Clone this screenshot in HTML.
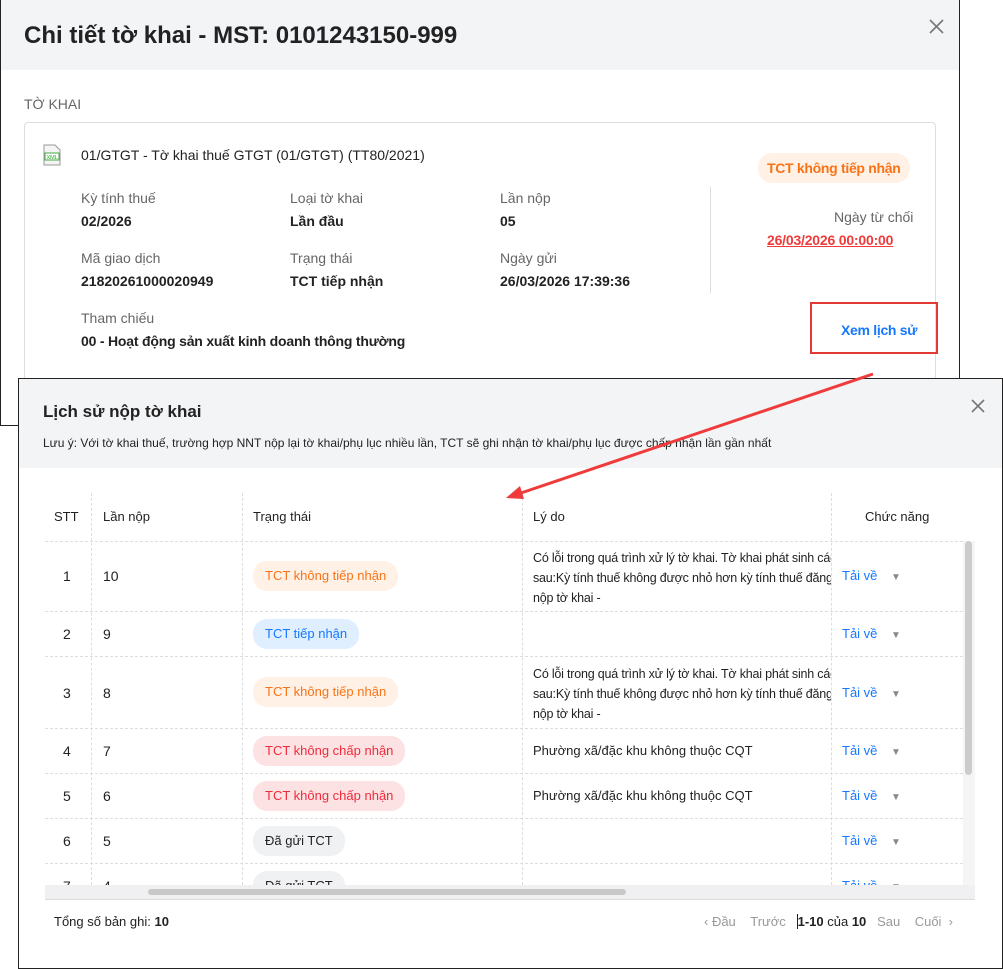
<!DOCTYPE html>
<html><head><meta charset="utf-8"><style>
*{box-sizing:border-box;margin:0;padding:0}
body{width:1003px;height:969px;position:relative;overflow:hidden;background:#fff;font-family:"Liberation Sans",Arial,sans-serif;color:#222;font-size:14px}
.abs{position:absolute}
.m1{left:0;top:0;width:960px;height:426px;border:1px solid #222;border-top:none;background:#fff}
.m1h{left:1px;top:0;width:958px;height:70px;background:#f3f4f6}
.lbl{color:#666;font-size:14px}
.val{color:#222;font-size:14px;font-weight:bold}
.pill{display:inline-block;border-radius:14px;padding:0 12px;height:30px;line-height:30px;font-size:13px}
.or{background:#fff1e6;color:#f97316}
.bl{background:#e0efff;color:#1677ff}
.rd{background:#fde2e4;color:#ef2b3a}
.gr{background:#f0f1f3;color:#222}
.m2{left:18px;top:378px;width:985px;height:591px;border:1px solid #222;background:#fff}
.vl{border-left:1px dashed #ddd}
.hl{border-top:1px dashed #ddd}
.tai{color:#1677ff;font-size:13px}
.car{color:#888;font-size:10px}
</style></head><body>
<div class="abs m1"></div>
<div class="abs m1h"></div>
<div class="abs" style="left:24px;top:22px;font-size:24px;font-weight:bold;color:#222">Chi tiết tờ khai - MST: 0101243150-999</div>
<svg class="abs" style="left:929px;top:19px" width="15" height="15"><path d="M1 1L14 14M14 1L1 14" stroke="#777" stroke-width="1.6"/></svg>
<div class="abs" style="left:24px;top:96px;font-size:14px;color:#666">TỜ KHAI</div>
<div class="abs" style="left:24px;top:122px;width:912px;height:300px;border:1px solid #ddd;border-radius:4px"></div>
<svg class="abs" style="left:42px;top:144px" width="20" height="22" viewBox="0 0 20 22"><path d="M2 1h11l5 5v15H2z" fill="#f4f4f4" stroke="#999"/><rect x="3" y="9" width="14" height="7" fill="#fff" stroke="#4a4"/><text x="4.5" y="15" font-size="5.5" fill="#2a2" font-family="Liberation Sans">XML</text></svg>
<div class="abs val" style="left:81px;top:147px;font-weight:normal">01/GTGT - Tờ khai thuế GTGT (01/GTGT) (TT80/2021)</div>
<div class="abs lbl" style="left:81px;top:190px">Kỳ tính thuế</div><div class="abs val" style="left:81px;top:213px">02/2026</div>
<div class="abs lbl" style="left:290px;top:190px">Loại tờ khai</div><div class="abs val" style="left:290px;top:213px">Lần đầu</div>
<div class="abs lbl" style="left:500px;top:190px">Lần nộp</div><div class="abs val" style="left:500px;top:213px">05</div>
<div class="abs lbl" style="left:81px;top:250px">Mã giao dịch</div><div class="abs val" style="left:81px;top:273px">21820261000020949</div>
<div class="abs lbl" style="left:290px;top:250px">Trạng thái</div><div class="abs val" style="left:290px;top:273px">TCT tiếp nhận</div>
<div class="abs lbl" style="left:500px;top:250px">Ngày gửi</div><div class="abs val" style="left:500px;top:273px">26/03/2026 17:39:36</div>
<div class="abs lbl" style="left:81px;top:310px">Tham chiếu</div><div class="abs val" style="left:81px;top:333px;letter-spacing:-0.2px">00 - Hoạt động sản xuất kinh doanh thông thường</div>
<div class="abs" style="left:710px;top:187px;width:1px;height:106px;background:#ddd"></div>
<div class="abs pill or" style="left:758px;top:153px;font-size:14px;font-weight:bold;padding:0 9px;letter-spacing:-0.3px">TCT không tiếp nhận</div>
<div class="abs lbl" style="left:834px;top:209px">Ngày từ chối</div>
<div class="abs" style="left:767px;top:232px;color:#ef3b3b;text-decoration:underline;font-weight:bold;letter-spacing:-0.2px">26/03/2026 00:00:00</div>
<div class="abs" style="left:810px;top:302px;width:128px;height:52px;border:2px solid #e53935"></div>
<div class="abs" style="left:841px;top:322px;color:#1677ff;font-weight:bold;letter-spacing:-0.3px">Xem lịch sử</div>

<div class="abs m2"></div>
<div class="abs" style="left:19px;top:379px;width:983px;height:89px;background:#f3f4f6"></div>
<div class="abs" style="left:43px;top:402px;font-size:17px;font-weight:bold">Lịch sử nộp tờ khai</div>
<div class="abs" style="left:43px;top:436px;font-size:12px">Lưu ý: Với tờ khai thuế, trường hợp NNT nộp lại tờ khai/phụ lục nhiều lần, TCT sẽ ghi nhận tờ khai/phụ lục được chấp nhận lần gần nhất</div>
<svg class="abs" style="left:971px;top:399px" width="14" height="14"><path d="M1 1L13 13M13 1L1 13" stroke="#777" stroke-width="1.6"/></svg>

<div class="abs vl" style="left:91px;top:493px;height:392px"></div>
<div class="abs vl" style="left:242px;top:493px;height:392px"></div>
<div class="abs vl" style="left:522px;top:493px;height:392px"></div>
<div class="abs vl" style="left:831px;top:493px;height:392px"></div>
<div class="abs" style="left:54px;top:509px;font-size:13px">STT</div>
<div class="abs" style="left:103px;top:509px;font-size:13px">Lần nộp</div>
<div class="abs" style="left:253px;top:509px;font-size:13px">Trạng thái</div>
<div class="abs" style="left:533px;top:509px;font-size:13px">Lý do</div>
<div class="abs" style="left:865px;top:509px;font-size:13px">Chức năng</div>
<div class="abs hl" style="left:45px;top:541px;width:918px"></div>
<div class="abs hl" style="left:45px;top:611px;width:918px"></div>
<div class="abs hl" style="left:45px;top:656px;width:918px"></div>
<div class="abs hl" style="left:45px;top:728px;width:918px"></div>
<div class="abs hl" style="left:45px;top:773px;width:918px"></div>
<div class="abs hl" style="left:45px;top:818px;width:918px"></div>
<div class="abs hl" style="left:45px;top:863px;width:918px"></div>

<div style="position:absolute;left:45px;top:0;width:918px;height:885px;overflow:hidden">
<div class="abs" style="left:18px;top:568px">1</div><div class="abs" style="left:58px;top:568px">10</div>
<div class="abs pill or" style="left:208px;top:561px">TCT không tiếp nhận</div>
<div class="abs" style="left:488px;top:548px;width:298px;overflow:hidden;white-space:nowrap;font-size:12.5px;line-height:20px;letter-spacing:-0.2px">Có lỗi trong quá trình xử lý tờ khai. Tờ khai phát sinh các<br>sau:Kỳ tính thuế không được nhỏ hơn kỳ tính thuế đăng<br>nộp tờ khai -</div>
<div class="abs tai" style="left:797px;top:568px">Tải về <span class="car" style="margin-left:10px">▼</span></div>

<div class="abs" style="left:18px;top:626px">2</div><div class="abs" style="left:58px;top:626px">9</div>
<div class="abs pill bl" style="left:208px;top:619px">TCT tiếp nhận</div>
<div class="abs tai" style="left:797px;top:626px">Tải về <span class="car" style="margin-left:10px">▼</span></div>

<div class="abs" style="left:18px;top:685px">3</div><div class="abs" style="left:58px;top:685px">8</div>
<div class="abs pill or" style="left:208px;top:677px">TCT không tiếp nhận</div>
<div class="abs" style="left:488px;top:664px;width:298px;overflow:hidden;white-space:nowrap;font-size:12.5px;line-height:20px;letter-spacing:-0.2px">Có lỗi trong quá trình xử lý tờ khai. Tờ khai phát sinh các<br>sau:Kỳ tính thuế không được nhỏ hơn kỳ tính thuế đăng<br>nộp tờ khai -</div>
<div class="abs tai" style="left:797px;top:685px">Tải về <span class="car" style="margin-left:10px">▼</span></div>

<div class="abs" style="left:18px;top:743px">4</div><div class="abs" style="left:58px;top:743px">7</div>
<div class="abs pill rd" style="left:208px;top:736px">TCT không chấp nhận</div>
<div class="abs" style="left:488px;top:743px;font-size:13px">Phường xã/đặc khu không thuộc CQT</div>
<div class="abs tai" style="left:797px;top:743px">Tải về <span class="car" style="margin-left:10px">▼</span></div>

<div class="abs" style="left:18px;top:788px">5</div><div class="abs" style="left:58px;top:788px">6</div>
<div class="abs pill rd" style="left:208px;top:781px">TCT không chấp nhận</div>
<div class="abs" style="left:488px;top:788px;font-size:13px">Phường xã/đặc khu không thuộc CQT</div>
<div class="abs tai" style="left:797px;top:788px">Tải về <span class="car" style="margin-left:10px">▼</span></div>

<div class="abs" style="left:18px;top:833px">6</div><div class="abs" style="left:58px;top:833px">5</div>
<div class="abs pill gr" style="left:208px;top:826px">Đã gửi TCT</div>
<div class="abs tai" style="left:797px;top:833px">Tải về <span class="car" style="margin-left:10px">▼</span></div>

<div class="abs" style="left:18px;top:878px">7</div><div class="abs" style="left:58px;top:878px">4</div>
<div class="abs pill gr" style="left:208px;top:871px">Đã gửi TCT</div>
<div class="abs tai" style="left:797px;top:878px">Tải về <span class="car" style="margin-left:10px">▼</span></div>
</div>
<div class="abs" style="left:963px;top:541px;width:12px;height:344px;background:#f5f5f5"></div>
<div class="abs" style="left:965px;top:541px;width:7px;height:234px;background:#ccc;border-radius:4px"></div>
<div class="abs" style="left:45px;top:885px;width:930px;height:15px;background:#f0f0f2;border-bottom:1px solid #ddd"></div>
<div class="abs" style="left:148px;top:889px;width:478px;height:6px;background:#c8c8c8;border-radius:3px"></div>

<div class="abs" style="left:54px;top:914px;font-size:13px">Tổng số bản ghi: <b>10</b></div>
<div class="abs" style="left:704px;top:914px;font-size:13px;color:#999;white-space:nowrap">‹ Đầu &nbsp;&nbsp;&nbsp;Trước &nbsp;&nbsp;<span style="color:#222;border-left:1px solid #222"><b>1-10</b> của <b>10</b></span> &nbsp;&nbsp;Sau &nbsp;&nbsp;&nbsp;Cuối &nbsp;›</div>

<svg class="abs" style="left:0;top:0" width="1003" height="969"><line x1="873" y1="374" x2="518" y2="494" stroke="#ef3b3b" stroke-width="3"/><polygon points="506,498 520,486 524,499" fill="#ef3b3b"/></svg>
</body></html>
